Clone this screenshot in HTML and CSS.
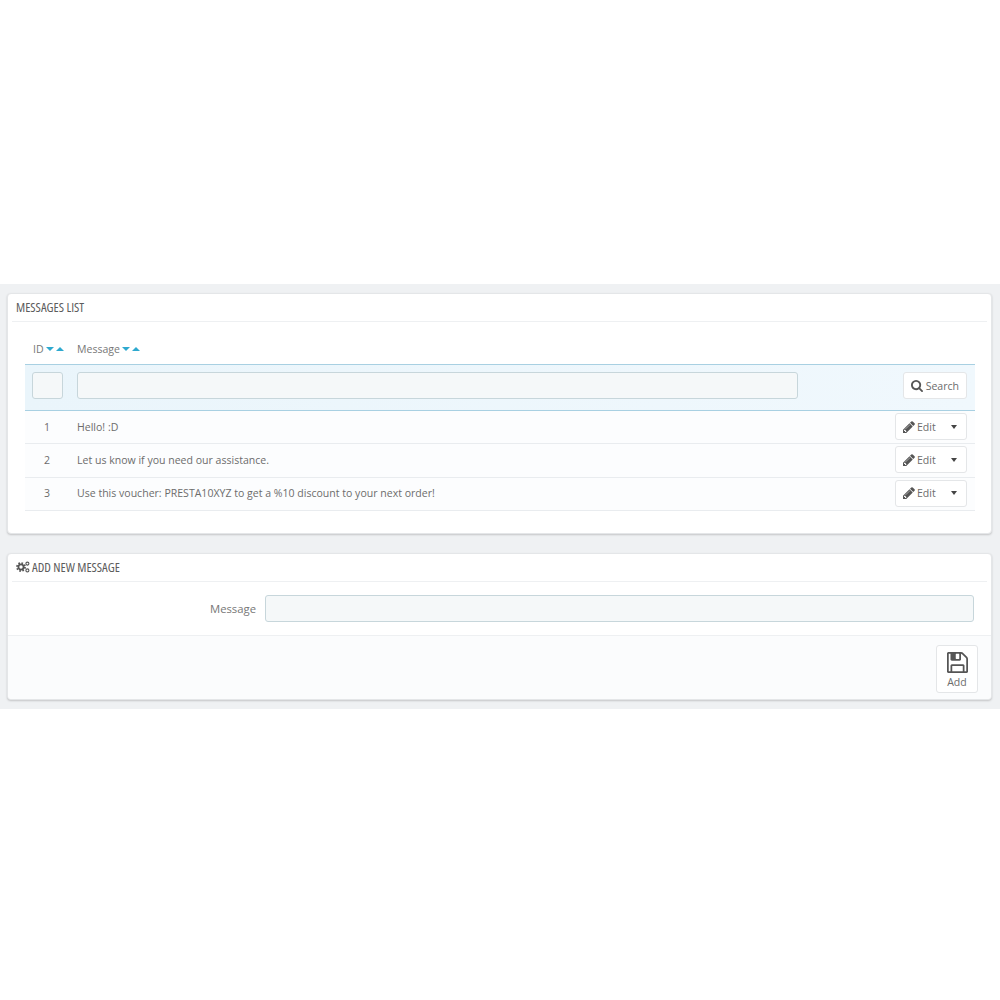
FILE: index.html
```html
<!doctype html>
<html lang="en">
  <head>
    <meta charset="UTF-8" />
    <title>Messages list</title>
    <link rel="stylesheet" href="styles.css">
  </head>
  <body>
    <div class="band">
      <section class="panel panel-list">
        <h3 class="panel-heading">MESSAGES LIST</h3>
        <div class="list">
          <div class="list-head">
            <span class="col-id">ID<i class="sort down"></i><i class="sort up"></i></span>
            <span class="col-msg">Message<i class="sort down"></i><i class="sort up"></i></span>
          </div>
          <div class="list-filter">
            <input class="input input-id" type="text" />
            <input class="input input-msg" type="text" />
            <button class="btn btn-search">
              <svg class="icon" viewBox="0 0 1664 1664"><path d="M1152 704q0-185-131.5-316.5t-316.5-131.5-316.5 131.5-131.5 316.5 131.5 316.5 316.5 131.5 316.5-131.5 131.5-316.5zm512 832q0 52-38 90t-90 38q-54 0-90-38l-343-342q-179 124-399 124-143 0-273.5-55.5t-225-150-150-225-55.5-273.5 55.5-273.5 150-225 225-150 273.5-55.5 273.5 55.5 225 150 150 225 55.5 273.5q0 220-124 399l343 343q37 37 37 90z"/></svg>
              Search
            </button>
          </div>
          <div class="list-row">
            <span class="cell-id">1</span>
            <span class="cell-msg">Hello! :D</span>
            <button class="btn btn-edit">
              <svg class="icon" viewBox="128 128 1536 1536"><path d="M491 1536l91-91-235-235-91 91v107h128v128h107zm523-928q0-22-22-22-10 0-17 7l-542 542q-7 7-7 17 0 22 22 22 10 0 17-7l542-542q7-7 7-17zm-54-192l416 416-832 832h-416v-416zm683 96q0 53-37 90l-166 166-416-416 166-165q36-38 90-38 53 0 91 38l235 234q37 39 37 91z"/></svg>
              Edit<i class="caret"></i>
            </button>
          </div>
          <div class="list-row">
            <span class="cell-id">2</span>
            <span class="cell-msg">Let us know if you need our assistance.</span>
            <button class="btn btn-edit">
              <svg class="icon" viewBox="128 128 1536 1536"><path d="M491 1536l91-91-235-235-91 91v107h128v128h107zm523-928q0-22-22-22-10 0-17 7l-542 542q-7 7-7 17 0 22 22 22 10 0 17-7l542-542q7-7 7-17zm-54-192l416 416-832 832h-416v-416zm683 96q0 53-37 90l-166 166-416-416 166-165q36-38 90-38 53 0 91 38l235 234q37 39 37 91z"/></svg>
              Edit<i class="caret"></i>
            </button>
          </div>
          <div class="list-row">
            <span class="cell-id">3</span>
            <span class="cell-msg">Use this voucher: PRESTA10XYZ to get a %10 discount to your next order!</span>
            <button class="btn btn-edit">
              <svg class="icon" viewBox="128 128 1536 1536"><path d="M491 1536l91-91-235-235-91 91v107h128v128h107zm523-928q0-22-22-22-10 0-17 7l-542 542q-7 7-7 17 0 22 22 22 10 0 17-7l542-542q7-7 7-17zm-54-192l416 416-832 832h-416v-416zm683 96q0 53-37 90l-166 166-416-416 166-165q36-38 90-38 53 0 91 38l235 234q37 39 37 91z"/></svg>
              Edit<i class="caret"></i>
            </button>
          </div>
        </div>
      </section>

      <section class="panel panel-form">
        <h3 class="panel-heading">
          <svg class="icon-cogs" viewBox="0 0 14 12">
            <circle class="gear-teeth" cx="5" cy="6" r="4"/>
            <circle class="gear-ring" cx="5" cy="6" r="2.6"/>
            <circle class="gear-ring small" cx="11.4" cy="2.6" r="1.5"/>
            <circle class="gear-ring small" cx="11.4" cy="9.4" r="1.5"/>
          </svg>
          ADD NEW MESSAGE
        </h3>
        <div class="form-group">
          <label for="message">Message</label>
          <input class="input input-wide" id="message" type="text" />
        </div>
        <div class="panel-footer">
          <button class="btn btn-add">
            <svg class="icon-save" viewBox="128 128 1536 1536"><path d="M512 1536h768v-384h-768v384zm896 0h128v-896q0-14-10-38.5t-20-34.5l-281-281q-10-10-34-20t-39-10v416q0 40-28 68t-68 28h-576q-40 0-68-28t-28-68v-416h-128v1280h128v-416q0-40 28-68t68-28h832q40 0 68 28t28 68v416zm-384-928v-320q0-13-9.5-22.5t-22.5-9.5h-192q-13 0-22.5 9.5t-9.5 22.5v320q0 13 9.5 22.5t22.5 9.5h192q13 0 22.5-9.5t9.5-22.5zm640 32v928q0 40-28 68t-68 28h-1344q-40 0-68-28t-28-68v-1344q0-40 28-68t68-28h928q40 0 88 20t76 48l280 280q28 28 48 76t20 88z"/></svg>
            <span class="add-label">Add</span>
          </button>
        </div>
      </section>
    </div>
  </body>
</html>
```
FILE: styles.css
```css
html,
body {
  margin: 0;
  background: #fff;
}
body {
  font-family: "Open Sans", sans-serif;
  font-size: 10.55px;
  color: #6c6c6c;
}
.band {
  margin-top: 284px;
  height: 425px;
  box-sizing: border-box;
  padding: 9px 8px 9px 7px;
  background: #eff1f3;
}
.panel {
  box-sizing: border-box;
  background: #fff;
  border: 1px solid #e4e6e8;
  border-radius: 4px;
  box-shadow: 0 1px 2px rgba(0, 0, 0, 0.18);
}
.panel-list {
  height: 241px;
  margin-bottom: 19px;
}
.panel-form {
  height: 147px;
}
.panel-heading {
  display: flex;
  align-items: center;
  gap: 2px;
  box-sizing: border-box;
  height: 28px;
  margin: 0 4px;
  padding: 0 4px 2px;
  font-family: "Open Sans", sans-serif;
  font-stretch: 75%;
  font-size: 12.9px;
  font-weight: 400;
  color: #5c5c5c;
  border-bottom: 1px solid #eef0f2;
}
.list {
  margin: 0 16px 0 17px;
}
.list-head {
  display: flex;
  align-items: center;
  height: 42px;
  padding-top: 12px;
  box-sizing: border-box;
  color: #777;
}
.col-id {
  width: 52px;
  padding-left: 8px;
  box-sizing: border-box;
}
.sort {
  display: inline-block;
  margin-left: 2px;
  border-left: 4px solid transparent;
  border-right: 4px solid transparent;
  vertical-align: 2px;
}
.sort.down {
  border-top: 4px solid #2ea9cf;
}
.sort.up {
  border-bottom: 4px solid #2ea9cf;
}
.list-filter {
  display: flex;
  align-items: center;
  box-sizing: border-box;
  height: 47px;
  padding: 0 7px 4px;
  background: linear-gradient(to right, #eaf5fb, #f0f8fd);
  border-top: 1px solid #a8d0e2;
  border-bottom: 1px solid #a8d0e2;
}
.input {
  box-sizing: border-box;
  height: 27px;
  padding: 0 6px;
  background: #f5f8f9;
  border: 1px solid #c7d6db;
  border-radius: 3px;
}
.input-id {
  width: 31px;
  margin-right: 14px;
}
.input-msg {
  width: 721px;
  margin-right: 105px;
}
.btn {
  box-sizing: border-box;
  font-family: "Open Sans", sans-serif;
  font-size: 10.55px;
  color: #6c6c6c;
  background: #fff;
  border: 1px solid #e4e6e8;
  border-radius: 3px;
}
.icon {
  width: 12px;
  height: 12px;
  fill: #555;
  vertical-align: -2px;
}
.btn-search {
  width: 64px;
  height: 27px;
  padding: 0;
}
.list-row {
  display: flex;
  align-items: center;
  box-sizing: border-box;
  height: 33.3px;
  padding-bottom: 1px;
  background: #fcfdfe;
  border-bottom: 1px solid #e9ecef;
}
.cell-id {
  width: 44px;
  margin-right: 8px;
  text-align: center;
}
.cell-msg {
  flex: 1;
}
.btn-edit {
  display: flex;
  align-items: center;
  justify-content: flex-start;
  gap: 2px;
  width: 72px;
  height: 27px;
  margin-right: 8px;
  padding: 0 0 0 7px;
}
.caret {
  width: 0;
  height: 0;
  margin-left: 13px;
  border-left: 3.5px solid transparent;
  border-right: 3.5px solid transparent;
  border-top: 4px solid #444;
}
.icon-cogs {
  width: 14px;
  height: 12px;
}
.gear-teeth {
  fill: none;
  stroke: #555;
  stroke-width: 1.8;
  stroke-dasharray: 1.6 1.54;
}
.gear-ring {
  fill: none;
  stroke: #555;
  stroke-width: 1.8;
}
.gear-ring.small {
  stroke-width: 1.1;
}
.form-group {
  display: flex;
  align-items: center;
  justify-content: flex-end;
  gap: 9px;
  height: 53px;
  margin-right: 17px;
  box-sizing: border-box;
}
.form-group label {
  font-size: 11.3px;
  color: #777;
}
.input-wide {
  width: 709px;
}
.panel-footer {
  display: flex;
  justify-content: flex-end;
  box-sizing: border-box;
  height: 64px;
  padding: 9px 13px 0 0;
  background: #fbfcfd;
  border-top: 1px solid #eef0f2;
  border-radius: 0 0 4px 4px;
}
.btn-add {
  display: flex;
  flex-direction: column;
  align-items: center;
  width: 42px;
  height: 48px;
  padding: 6px 0 0;
  line-height: 14px;
}
.icon-save {
  width: 21px;
  height: 21px;
  fill: #555;
}
.add-label {
  margin-top: 2px;
}
```
